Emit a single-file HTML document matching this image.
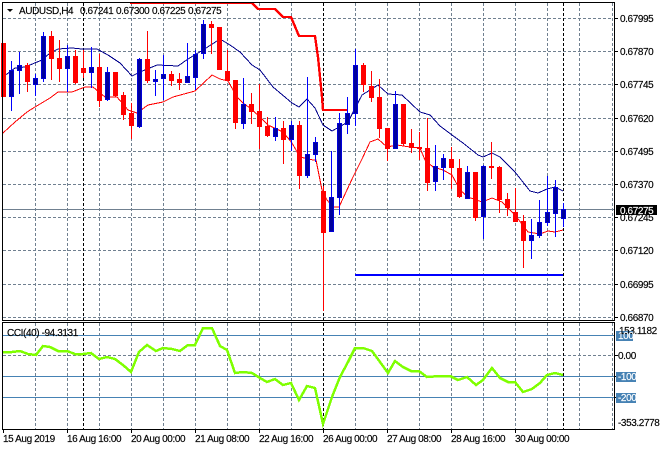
<!DOCTYPE html>
<html><head><meta charset="utf-8"><style>
html,body{margin:0;padding:0;background:#fff;width:660px;height:450px;overflow:hidden}
svg{display:block}
text{font-family:"Liberation Sans",sans-serif;font-size:10px;letter-spacing:-.4px;fill:#000;stroke:#000;stroke-width:.15px}
text.w{fill:#fff;stroke:#fff}
</style></head><body>
<svg width="660" height="450" viewBox="0 0 660 450" xmlns="http://www.w3.org/2000/svg">
<rect width="660" height="450" fill="#fff"/>
<g fill="none">
<!-- grid -->
<path stroke="#708090" stroke-dasharray="3 2" d="M3 18.5H612M3 51.5H612M3 84.5H612M3 118.5H612M3 151.5H612M3 184.5H612M3 217.5H612M3 250.5H612M3 284.5H612M3 317.5H612M3 355.5H612"/>
<path stroke="#708090" stroke-dasharray="3 2" d="M35.5 3V320M67.5 3V320M99.5 3V320M131.5 3V320M163.5 3V320M195.5 3V320M227.5 3V320M259.5 3V320M291.5 3V320M355.5 3V320M387.5 3V320M419.5 3V320M451.5 3V320M483.5 3V320M515.5 3V320M547.5 3V320M579.5 3V320M612.5 3V320"/>
<path stroke="#708090" stroke-dasharray="3 2" d="M35.5 323V429M67.5 323V429M99.5 323V429M131.5 323V429M163.5 323V429M195.5 323V429M227.5 323V429M259.5 323V429M291.5 323V429M355.5 323V429M387.5 323V429M419.5 323V429M451.5 323V429M483.5 323V429M515.5 323V429M547.5 323V429M579.5 323V429M612.5 323V429"/>
<path stroke="#000" stroke-dasharray="3 2" d="M83.5 3V320M323.5 3V320M563.5 3V320M83.5 323V429M323.5 323V429M563.5 323V429"/>
<path stroke="#708090" d="M3 209.5H615"/>
<path stroke="#4682b4" d="M3 335.5H615M3 376.5H615M3 397.5H615"/>
<!-- thick red line -->
<path shape-rendering="crispEdges" stroke="#ff0000" stroke-width="2.4" d="M130 3H252L258 9H275L283 17H291L299 36H315L318 57L322 97L323 110H347"/>
<!-- blue horizontal -->
<path stroke="#0000ff" stroke-width="2" d="M355 275H563"/>
<!-- MAs -->
<polyline shape-rendering="crispEdges" stroke="#00008b" points="3,76 7,74 15,68 25,67 42,60 50,53 58,49 72,48 82,49 97,49 108,55 120,63 132,76 140,72 157,65 178,66 188,59 203,50 220,39 230,45 240,52 252,65 260,70 273,87 292,103 299,107 307,99 315,108 323,125 332,131 348,122 362,95 378,85 388,94 402,95 420,112 430,115 440,126 452,135 463,143 478,155 483,157 492,153 500,157 503,160 515,172 530,191 538,193 547,189 555,187 563,191"/>
<polyline shape-rendering="crispEdges" stroke="#ff0000" points="3,133 15,122 27,112 35,107 50,98 58,92 72,92 85,87 93,87 105,97 117,97 128,110 137,113 148,105 163,102 173,97 195,91 212,75 220,79 228,81 237,97 243,103 250,108 260,117 268,125 283,132 292,143 300,157 313,160 316,160 322,190 327,200 333,207 339,207 353,177 362,159 370,142 378,139 387,147 397,145 410,147 420,148 425,160 433,167 443,170 452,175 460,190 468,197 482,202 492,198 502,202 515,215 528,232 540,234 548,231 555,232 563,230"/>
<!-- wicks -->
<path stroke="#ff0000" d="M3.5 43V97M27.5 63V92M51.5 31V80M59.5 40V82M75.5 50V84M83.5 50V78M99.5 54V107M115.5 72V97M123.5 92V120M131.5 103V139M147.5 31V83M171.5 71V86M179.5 73V90M211.5 21V54M219.5 27V70M227.5 50V80M235.5 80V129M251.5 93V124M259.5 84V149M267.5 117V137M283.5 121V164M299.5 121V189M323.5 186V311M363.5 63V92M371.5 71V102M379.5 79V138M387.5 128V161M403.5 104V146M411.5 129V153M419.5 132V160M427.5 118V191M451.5 147V189M459.5 159V198M475.5 172V221M491.5 142V179M499.5 166V213M507.5 193V216M515.5 188V222M523.5 215V268"/>
<path stroke="#0000ff" d="M11.5 61V111M19.5 52V94M35.5 74V96M43.5 32V82M67.5 45V92M91.5 47V88M107.5 67V101M139.5 58V128M155.5 70V96M163.5 55V100M187.5 43V83M195.5 50V90M203.5 20V59M243.5 78V129M275.5 117V141M291.5 121V151M307.5 77V178M315.5 137V162M331.5 151V232M339.5 113V215M347.5 97V134M355.5 49V126M395.5 91V149M435.5 145V191M443.5 154V180M467.5 166V199M483.5 165V239M531.5 219V259M539.5 200V238M547.5 176V226M555.5 180V237M563.5 203V227"/>
<!-- bodies -->
<path fill="#ff0000" d="M1 43h5V97H1zM25 65h5V82h-5zM49 36h5V59h-5zM57 58h5V69h-5zM73 56h5V83h-5zM81 68h5V73h-5zM97 67h5V101h-5zM113 72h5V96h-5zM121 95h5V115h-5zM129 113h5V126h-5zM145 59h5V81h-5zM169 74h5V81h-5zM177 79h5V83h-5zM209 24h5V28h-5zM217 27h5V70h-5zM225 71h5V81h-5zM233 80h5V123h-5zM249 104h5V112h-5zM257 111h5V127h-5zM265 126h5V136h-5zM281 128h5V140h-5zM297 125h5V176h-5zM321 191h5V233h-5zM361 65h5V85h-5zM369 86h5V98h-5zM377 97h5V129h-5zM385 128h5V149h-5zM401 104h5V144h-5zM409 143h5V148h-5zM417 147h5V149h-5zM425 148h5V183h-5zM449 159h5V168h-5zM457 168h5V197h-5zM473 172h5V218h-5zM489 166h5V168h-5zM497 167h5V200h-5zM505 199h5V208h-5zM513 212h5V222h-5zM521 221h5V241h-5z"/>
<path fill="#00009c" stroke="#0000d8" d="M9.5 70.5h4V96.5H9.5zM17.5 65.5h4V70.5h-4zM33.5 78.5h4V84.5h-4zM41.5 36.5h4V78.5h-4zM65.5 56.5h4V68.5h-4zM89.5 67.5h4V72.5h-4zM105.5 72.5h4V99.5h-4zM137.5 59.5h4V126.5h-4zM153.5 79.5h4V81.5h-4zM161.5 74.5h4V78.5h-4zM185.5 76.5h4V82.5h-4zM193.5 54.5h4V77.5h-4zM201.5 24.5h4V53.5h-4zM241.5 104.5h4V123.5h-4zM273.5 128.5h4V136.5h-4zM289.5 125.5h4V139.5h-4zM305.5 154.5h4V175.5h-4zM313.5 142.5h4V154.5h-4zM329.5 197.5h4V231.5h-4zM337.5 123.5h4V197.5h-4zM345.5 113.5h4V124.5h-4zM353.5 65.5h4V113.5h-4zM393.5 104.5h4V148.5h-4zM433.5 166.5h4V181.5h-4zM441.5 158.5h4V167.5h-4zM465.5 172.5h4V198.5h-4zM481.5 166.5h4V216.5h-4zM529.5 235.5h4V240.5h-4zM537.5 222.5h4V235.5h-4zM545.5 212.5h4V222.5h-4zM553.5 187.5h4V213.5h-4zM561.5 209.5h4V218.5h-4z"/>
<!-- CCI -->
<polyline shape-rendering="crispEdges" stroke="#7fff00" stroke-width="2.5" points="3,352 12,352 20,351 28,354 36,355 43,346 50,347 58,351 67,351 75,354 83,354 91,353 99,359 107,357 115,359 123,365 131,372 139,352 147,345 156,351 163,348 172,349 180,351 188,345 195,345 203,328 212,328 220,346 227,350 235,373 243,372 252,373 260,378 267,382 275,379 283,385 291,383 299,400 307,386 315,388 323,424 332,397 340,377 348,362 355,348 363,348 372,351 380,362 388,373 395,361 403,367 411,371 419,371 427,377 440,376 450,376 458,380 467,377 476,385 483,380 492,368 500,378 508,382 515,382 523,392 532,389 540,383 547,375 555,373 563,375"/>
<!-- frames -->
<path stroke="#000" d="M2.5 2V320M2 2.5H615M614.5 2V320M2 320.5H615M2.5 322V430M2 322.5H615M614.5 322V430M2 429.5H615"/>
<!-- ticks -->
<path stroke="#000" d="M615 18.5h3M615 51.5h3M615 84.5h3M615 118.5h3M615 151.5h3M615 184.5h3M615 217.5h3M615 250.5h3M615 284.5h3M615 317.5h3M615 355.5h3M615 376.5h3M615 397.5h3M3.5 430v3M67.5 430v3M131.5 430v3M195.5 430v3M259.5 430v3M323.5 430v3M387.5 430v3M451.5 430v3M515.5 430v3"/>
<!-- boxes -->
<rect x="616" y="331" width="17" height="10" fill="#4682b4"/>
<rect x="616" y="372" width="20" height="10" fill="#4682b4"/>
<rect x="616" y="393" width="20" height="10" fill="#4682b4"/>
</g>
<path d="M7 9h6l-3 3z" fill="#000"/>
<text x="19" y="14">AUDUSD,H4</text>
<text x="80" y="14">0.67241</text>
<text x="116" y="14">0.67300</text>
<text x="152" y="14">0.67225</text>
<text x="188" y="14">0.67275</text>
<text x="7" y="336">CCI(40) -94.3131</text>
<text x="620" y="22">0.67995</text>
<text x="620" y="55">0.67870</text>
<text x="620" y="88">0.67745</text>
<text x="620" y="122">0.67620</text>
<text x="620" y="155">0.67495</text>
<text x="620" y="188">0.67370</text>
<text x="620" y="221">0.67245</text>
<text x="620" y="254">0.67120</text>
<text x="620" y="288">0.66995</text>
<text x="620" y="321">0.66870</text>
<rect x="616" y="205" width="41" height="10" fill="#000"/>
<text x="620" y="214" class="w">0.67275</text>
<text x="619" y="334">153.1182</text>
<text x="618" y="339" class="w">100</text>
<text x="618" y="359">0.00</text>
<text x="618" y="380" class="w">-100</text>
<text x="618" y="401" class="w">-200</text>
<text x="618" y="426">-353.2778</text>
<text x="3" y="442">15 Aug 2019</text>
<text x="67" y="442">16 Aug 16:00</text>
<text x="131" y="442">20 Aug 00:00</text>
<text x="195" y="442">21 Aug 08:00</text>
<text x="259" y="442">22 Aug 16:00</text>
<text x="323" y="442">26 Aug 00:00</text>
<text x="387" y="442">27 Aug 08:00</text>
<text x="451" y="442">28 Aug 16:00</text>
<text x="515" y="442">30 Aug 00:00</text>
</svg>
</body></html>
